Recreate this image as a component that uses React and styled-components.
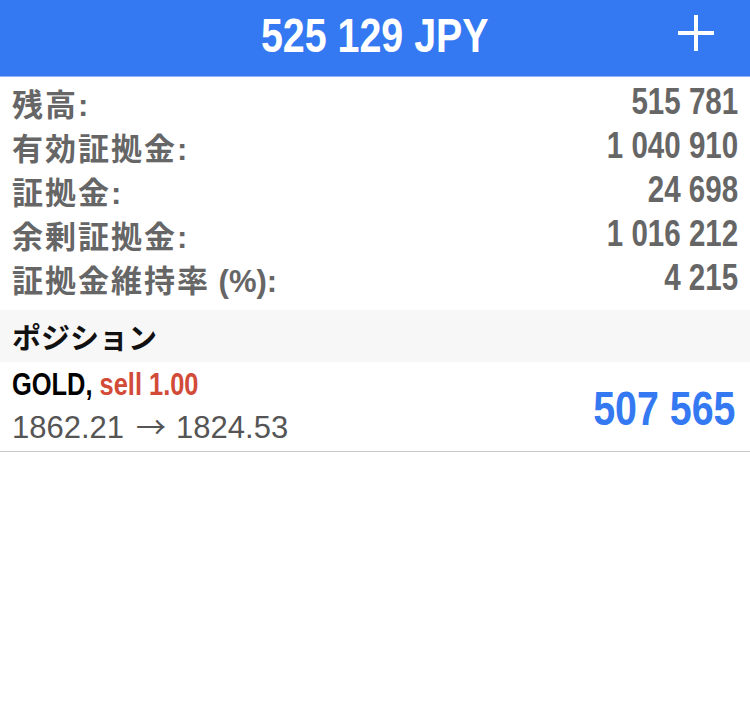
import styled, { createGlobalStyle } from 'styled-components'

const GlobalStyle = createGlobalStyle`
  html, body {
    margin: 0;
    padding: 0;
    background: #ffffff;
  }
  body {
    font-family: "Liberation Sans", "Noto Sans CJK JP", sans-serif;
  }
`

// no condensed face installed: squeeze Liberation Sans bold horizontally
const Condensed = styled.span`
  display: inline-block;
  font-family: "Liberation Sans", Arial, sans-serif;
  font-weight: 700;
  transform: scaleX(0.82);
  transform-origin: ${p => p.origin || 'center'};
  white-space: nowrap;
`

const Page = styled.div`
  width: 750px;
  min-height: 722px;
  background: #fff;
`

const Header = styled.header`
  height: 76px;
  background: #3579f2;
  border-bottom: 1px solid #8fb3f5;
  display: flex;
  align-items: center;
  justify-content: center;
  position: relative;
`

const Title = styled.h1`
  margin: 0;
  color: #fff;
  font-size: 48px;
  line-height: 1;
  padding-bottom: 4px;
`

const AddButton = styled.button`
  position: absolute;
  right: 34px;
  top: 13px;
  width: 40px;
  height: 40px;
  padding: 0;
  border: 0;
  background: transparent;
  display: flex;
  align-items: center;
  justify-content: center;
`

const Summary = styled.div`
  padding: 3px 12px 10px;
`

const Row = styled.div`
  height: 44px;
  display: flex;
  align-items: center;
  justify-content: space-between;
`

const Label = styled.span`
  color: #666;
  font-family: "Liberation Sans", "Noto Sans CJK JP", sans-serif;
  font-weight: 700;
  font-size: 31px;
  white-space: pre;
`

const Kanji = styled.span`
  letter-spacing: 2px;
`

const Value = styled.div`
  color: #666;
  font-size: 36px;
`

const Section = styled.div`
  height: 52px;
  background: #f7f7f7;
  display: flex;
  align-items: center;
  padding: 0 12px;
  color: #111;
  font-family: "Noto Sans CJK JP", sans-serif;
  font-weight: 700;
  font-size: 29px;
`

const Position = styled.div`
  height: 89px;
  border-bottom: 1px solid #c9c9c9;
  display: flex;
  align-items: center;
  justify-content: space-between;
  padding: 0 14px 0 12px;
`

const Info = styled.div`
  display: flex;
  flex-direction: column;
  gap: 4px;
`

const Symbol = styled.div`
  font-size: 31px;
  color: #000;
  line-height: 36px;
`

const Side = styled.span`
  color: ${p => (p.sell ? '#d24a38' : '#3579f2')};
`

const Prices = styled.div`
  font-family: "Liberation Sans", sans-serif;
  font-size: 31px;
  color: #555;
  line-height: 36px;
`

const Arrow = styled.span`
  font-family: "Noto Sans CJK JP", sans-serif;
  font-size: 30px;
  margin: 0 10px 0 12px;
`

const Profit = styled.div`
  font-size: 48px;
  color: #3579f2;
  padding-top: 4px;
`

const rows = [
  ['残高', ':', '515 781'],
  ['有効証拠金', ':', '1 040 910'],
  ['証拠金', ':', '24 698'],
  ['余剰証拠金', ':', '1 016 212'],
  ['証拠金維持率', ' (%):', '4 215'],
]

export default function App() {
  return (
    <Page>
      <GlobalStyle />
      <Header>
        <Title>
          <Condensed>525 129 JPY</Condensed>
        </Title>
        <AddButton aria-label="add">
          <svg width="38" height="38" viewBox="0 0 38 38">
            <path d="M19 1v36M1 19h36" stroke="#fff" strokeWidth="4" />
          </svg>
        </AddButton>
      </Header>
      <Summary>
        {rows.map(([name, suffix, v]) => (
          <Row key={name}>
            <Label>
              <Kanji>{name}</Kanji>
              {suffix}
            </Label>
            <Value>
              <Condensed origin="right">{v}</Condensed>
            </Value>
          </Row>
        ))}
      </Summary>
      <Section>ポジション</Section>
      <Position>
        <Info>
          <Symbol>
            <Condensed origin="left">
              GOLD, <Side sell>sell 1.00</Side>
            </Condensed>
          </Symbol>
          <Prices>
            1862.21<Arrow>→</Arrow>1824.53
          </Prices>
        </Info>
        <Profit>
          <Condensed origin="right">507 565</Condensed>
        </Profit>
      </Position>
    </Page>
  )
}
